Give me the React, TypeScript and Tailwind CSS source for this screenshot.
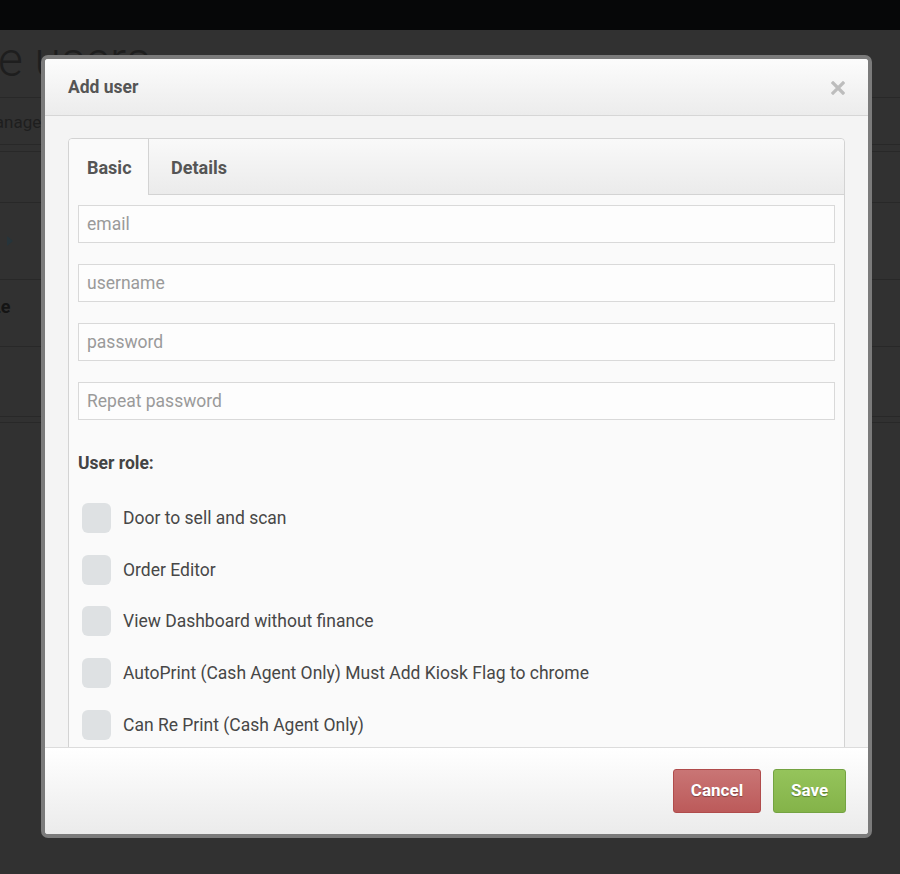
import React from "react";

const fields = ["email", "username", "password", "Repeat password"];

const roles = [
    "Door to sell and scan",
    "Order Editor",
    "View Dashboard without finance",
    "AutoPrint (Cash Agent Only) Must Add Kiosk Flag to chrome",
    "Can Re Print (Cash Agent Only)",
    "Scanner",
];

const CloseIcon: React.FC = () => (
    <svg width="14" height="14" viewBox="0 0 14 14" className="block">
        <path d="M2 2 L12 12 M12 2 L2 12" stroke="#bdbdbd" strokeWidth="3.2" strokeLinecap="square" />
    </svg>
);

// the faded page that sits behind the dialog
const Backdrop: React.FC = () => (
    <div className="flex flex-col">
        <div className="h-[30px] bg-[#060708]" />
        <div className="h-[68px] border-b border-[#282828] overflow-hidden">
            <p className="ml-[-2px] mt-[6px] text-[48px] font-light leading-none text-[#1e1e1e] whitespace-nowrap">e users</p>
        </div>
        <div className="h-[47px] border-b border-[#282828] flex items-center pt-[3px]">
            <p className="ml-[-20px] text-[17px] text-[#1e1e1e] whitespace-nowrap">Manage</p>
        </div>
        <div className="h-[7px] border-b border-[#282828]" />
        <div className="h-[51px] border-b border-[#282828]" />
        <div className="h-[77px] border-b border-[#282828] flex items-center pl-[7px]">
            <svg width="6" height="10" viewBox="0 0 6 10"><path d="M0 0 L6 5 L0 10 Z" fill="#27343a" /></svg>
        </div>
        <div className="h-[67px] border-b border-[#282828] flex items-start pt-[13px]">
            <p className="ml-[-9px] text-[18px] font-bold text-[#141414] whitespace-nowrap">Le</p>
        </div>
        <div className="h-[70px] border-b border-[#282828]" />
        <div className="h-[6px] border-b border-[#282828]" />
    </div>
);

const App: React.FC = () => (
    <div className="relative w-full h-[874px] bg-[#313131] overflow-hidden font-['Roboto','Liberation_Sans',sans-serif]">
        <Backdrop />

        <div className="absolute left-[41px] top-[55px] w-[831px] h-[783px] border-4 border-[#7b7b7b] rounded-[7px] bg-[#f4f4f4] flex flex-col overflow-hidden">
            {/* header */}
            <div className="h-[57px] shrink-0 flex items-center justify-between pl-[23px] pr-[23px] pt-[1px] border-b border-[#d6d6d6] bg-gradient-to-b from-[#fcfcfc] to-[#ececec]">
                <h3 className="text-[17.5px] font-bold text-[#555]">Add user</h3>
                <button className="cursor-pointer"><CloseIcon /></button>
            </div>

            {/* body */}
            <div className="flex-1 min-h-0 overflow-hidden px-[23px] pt-[22px]">
                <div className="border border-[#d3d3d3] rounded-[4px] bg-[#fafafa]">
                    <div className="h-[56px] flex border-b border-[#d3d3d3] rounded-t-[4px] bg-gradient-to-b from-[#f9f9f9] to-[#ebebeb]">
                        <div className="w-[80px] mb-[-1px] flex items-center pl-[18px] pt-[1px] bg-[#fafafa] border-r border-[#d3d3d3] rounded-tl-[4px]">
                            <span className="text-[18px] font-bold text-[#555]">Basic</span>
                        </div>
                        <div className="flex items-center pl-[22px] pt-[1px]">
                            <span className="text-[18px] font-bold text-[#555]">Details</span>
                        </div>
                    </div>

                    <div className="px-[9px] pt-[10px]">
                        <div className="flex flex-col gap-[21px]">
                            {fields.map((f) => (
                                <input
                                    key={f}
                                    placeholder={f}
                                    className="h-[38px] w-full border-[1.5px] border-[#d9d9d9] bg-[#fdfdfd] px-[8px] text-[17.5px] text-[#444] placeholder:text-[#9a9a9a] outline-none"
                                />
                            ))}
                        </div>

                        <p className="mt-[30px] text-[17.5px] font-bold text-[#444]">User role:</p>

                        <div className="mt-[27px] flex flex-col gap-[21.6px] pl-[4px]">
                            {roles.map((r) => (
                                <label key={r} className="flex items-center gap-[12px] cursor-pointer">
                                    <span className="w-[29px] h-[30px] shrink-0 rounded-[6px] bg-[#dee1e3]" />
                                    <span className="text-[17.5px] text-[#474747]">{r}</span>
                                </label>
                            ))}
                        </div>
                    </div>
                </div>
            </div>

            {/* footer */}
            <div className="h-[87px] shrink-0 flex items-center justify-end gap-[12px] pr-[22px] border-t border-[#dcdcdc] bg-gradient-to-b from-[#ffffff] to-[#ebebeb]">
                <button className="w-[88px] h-[44px] rounded-[3px] border border-[#b04c4c] bg-gradient-to-b from-[#c97575] to-[#bc5a5a] text-[17px] font-bold text-white [text-shadow:0_1px_1px_rgba(0,0,0,0.35)]">
                    Cancel
                </button>
                <button className="w-[73px] h-[44px] rounded-[3px] border border-[#74a342] bg-gradient-to-b from-[#95c45b] to-[#84b349] text-[17px] font-bold text-white [text-shadow:0_1px_1px_rgba(0,0,0,0.35)]">
                    Save
                </button>
            </div>
        </div>
    </div>
);

export default App;
